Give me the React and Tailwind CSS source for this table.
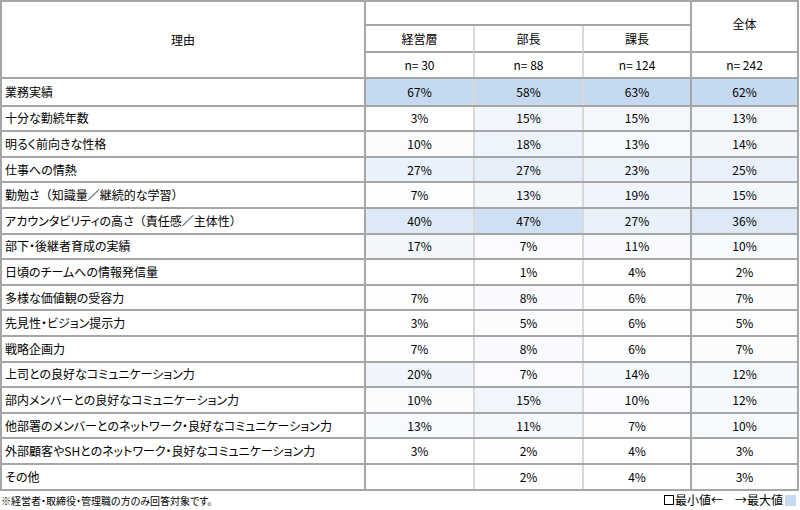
import React from 'react'

// 理由別の回答率（列ごとに最小値→最大値で色付け）
const ROWS = [
  ['業務実績', 67, 58, 63, 62],
  ['十分な勤続年数', 3, 15, 15, 13],
  ['明るく前向きな性格', 10, 18, 13, 14],
  ['仕事への情熱', 27, 27, 23, 25],
  ['勤勉さ（知識量／継続的な学習）', 7, 13, 19, 15],
  ['アカウンタビリティの高さ（責任感／主体性）', 40, 47, 27, 36],
  ['部下・後継者育成の実績', 17, 7, 11, 10],
  ['日頃のチームへの情報発信量', null, 1, 4, 2],
  ['多様な価値観の受容力', 7, 8, 6, 7],
  ['先見性・ビジョン提示力', 3, 5, 6, 5],
  ['戦略企画力', 7, 8, 6, 7],
  ['上司との良好なコミュニケーション力', 20, 7, 14, 12],
  ['部内メンバーとの良好なコミュニケーション力', 10, 15, 10, 12],
  ['他部署のメンバーとのネットワーク・良好なコミュニケーション力', 13, 11, 7, 10],
  ['外部顧客やSHとのネットワーク・良好なコミュニケーション力', 3, 2, 4, 3],
  ['その他', null, 2, 4, 3],
]

const MAX_RGB = [197, 217, 241]

const ranges = [1, 2, 3, 4].map((c) => {
  const vals = ROWS.map((r) => r[c]).filter((v) => v != null)
  return [Math.min(...vals), Math.max(...vals)]
})

const cellColor = (v, c) => {
  if (v == null) return '#ffffff'
  const [lo, hi] = ranges[c]
  const t = (v - lo) / (hi - lo)
  const ch = MAX_RGB.map((m) => Math.round(255 + (m - 255) * t))
  return `rgb(${ch[0]},${ch[1]},${ch[2]})`
}

// 括弧は全角幅のまま
const Label = ({ text }) =>
  text.split(/([（）])/).map((part, i) =>
    part === '（' || part === '）'
      ? <span key={i} className="[font-feature-settings:normal]">{part}</span>
      : <span key={i}>{part}</span>
  )

const colBorder = [
  'border-l-2 border-[#a6a6a6]',
  'border-l-2 border-[#d9d9d9]',
  'border-l-2 border-[#d9d9d9]',
  'border-l-2 border-[#a6a6a6]',
]
const colWidth = ['w-[109px]', 'w-[109px]', 'w-[108px]', 'flex-1']

export default function App() {
  return (
    <div className="w-[800px] h-[510px] bg-white text-black font-['Noto_Sans_CJK_JP',sans-serif] [font-feature-settings:'palt']">
      <div className="w-[799px] border-2 border-[#a6a6a6]">
        {/* header */}
        <div className="flex border-b-2 border-[#a6a6a6]">
          <div className="w-[362px] flex items-center justify-center text-[12px]">理由</div>
          <div className="flex-1 grid grid-cols-[109px_109px_108px_1fr] grid-rows-[24px_27px_24px] text-[12px]">
            <div className="col-span-3 border-l-2 border-b-2 border-[#a6a6a6]" />
            <div className="row-span-2 border-l-2 border-b-2 border-[#a6a6a6] flex items-center justify-center pb-[6px]">全体</div>
            <div className="border-l-2 border-b-2 border-[#a6a6a6] flex items-center justify-center">経営層</div>
            <div className="border-l-2 border-l-[#d9d9d9] border-b-2 border-b-[#a6a6a6] flex items-center justify-center">部長</div>
            <div className="border-l-2 border-l-[#d9d9d9] border-b-2 border-b-[#a6a6a6] flex items-center justify-center">課長</div>
            <div className="border-l-2 border-[#a6a6a6] flex items-center justify-center">n= 30</div>
            <div className="border-l-2 border-[#d9d9d9] flex items-center justify-center">n= 88</div>
            <div className="border-l-2 border-[#d9d9d9] flex items-center justify-center">n= 124</div>
            <div className="border-l-2 border-[#a6a6a6] flex items-center justify-center">n= 242</div>
          </div>
        </div>

        {/* rows */}
        {ROWS.map((r, i) => (
          <div key={i} className={`flex h-[25.6px] ${i > 0 ? 'border-t-2 border-[#a6a6a6]' : ''}`}>
            <div className="w-[362px] flex items-center pl-[3px] text-[12px] whitespace-nowrap overflow-hidden">
              <Label text={r[0]} />
            </div>
            {[1, 2, 3, 4].map((c) => (
              <div
                key={c}
                className={`${colWidth[c - 1]} ${colBorder[c - 1]} flex items-center justify-center text-[12px]`}
                style={{ backgroundColor: cellColor(r[c], c - 1) }}
              >
                {r[c] != null ? `${r[c]}%` : ''}
              </div>
            ))}
          </div>
        ))}
      </div>

      {/* footer */}
      <div className="w-[799px] flex items-center justify-between h-[19px] pr-[3px]">
        <span className="text-[10px] pl-[1px]">※経営者・取締役・管理職の方のみ回答対象です。</span>
        <span className="flex items-center text-[12px]">
          <span className="inline-block w-[10px] h-[10px] border border-black mr-[1px]" />
          最小値←　→最大値
          <span className="inline-block w-[11px] h-[11px] bg-[#c5d9f1] ml-[2px]" />
        </span>
      </div>
    </div>
  )
}
